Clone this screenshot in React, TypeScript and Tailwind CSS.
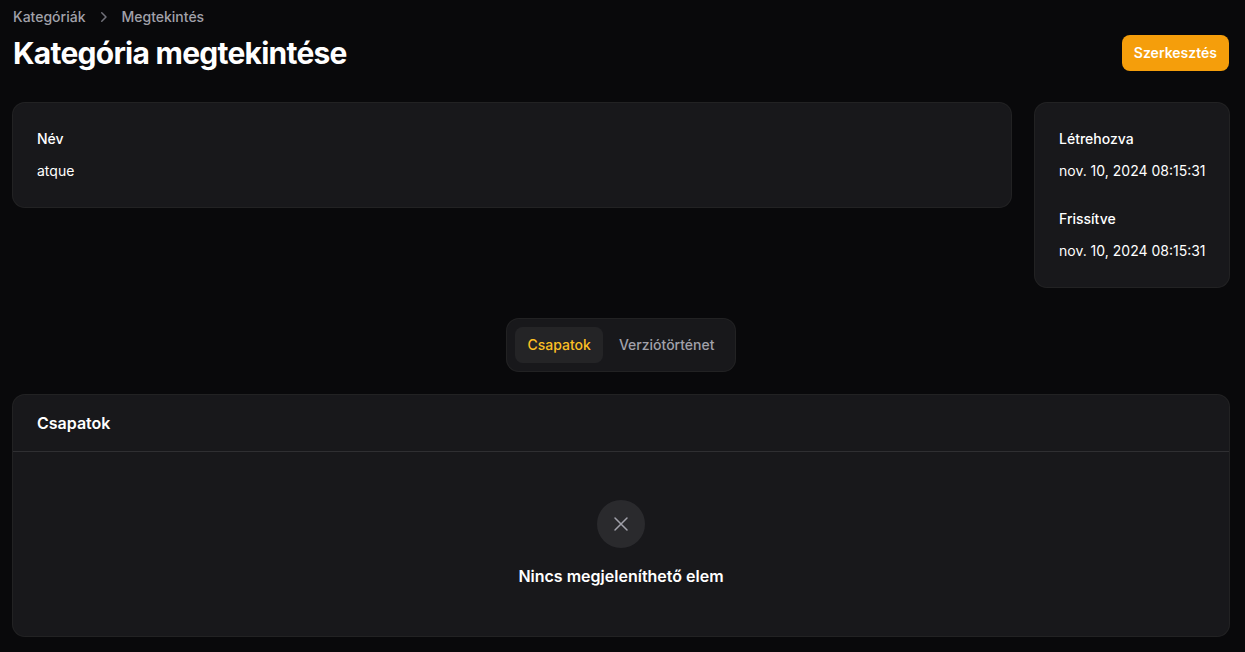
import React from 'react';

function Entry({ label, value }: { label: string; value: string }) {
  return (
    <div className="grid gap-y-2 text-sm leading-6 whitespace-nowrap">
      <dt className="font-medium text-white">{label}</dt>
      <dd className="text-white">{value}</dd>
    </div>
  );
}

const card = 'rounded-xl bg-[#18181b] ring-1 ring-white/10';

export default function App() {
  return (
    <div className="min-h-screen bg-[#09090b] pt-[5px] pr-4 pb-4 pl-[13px] font-['Inter',sans-serif] text-white">
      <header className="flex items-end justify-between">
        <div>
          <nav aria-label="Breadcrumb" className="mb-1.5 flex h-6 items-center gap-x-2 text-sm font-medium text-[#a1a1aa]">
            <a href="#">Kategóriák</a>
            <svg viewBox="0 0 20 20" fill="currentColor" className="size-5 text-[#71717a]" aria-hidden="true">
              <path fillRule="evenodd" clipRule="evenodd" d="M8.22 5.22a.75.75 0 0 1 1.06 0l4.25 4.25a.75.75 0 0 1 0 1.06l-4.25 4.25a.75.75 0 0 1-1.06-1.06L11.94 10 8.22 6.28a.75.75 0 0 1 0-1.06Z" />
            </svg>
            <a href="#">Megtekintés</a>
          </nav>
          <h1 className="text-3xl font-bold tracking-tight">Kategória megtekintése</h1>
        </div>
        <button type="button" className="rounded-lg bg-[#f59e0b] px-3 py-2 text-sm font-semibold text-white">Szerkesztés</button>
      </header>

      <div className="mt-8 flex items-start gap-6">
        <dl className={`${card} min-w-0 grow p-6`}>
          <Entry label="Név" value="atque" />
        </dl>
        <dl className={`${card} grid w-[194px] shrink-0 gap-6 p-6`}>
          <Entry label="Létrehozva" value="nov. 10, 2024 08:15:31" />
          <Entry label="Frissítve" value="nov. 10, 2024 08:15:31" />
        </dl>
      </div>

      <div role="tablist" className={`${card} mx-auto mt-8 flex w-fit gap-x-1 p-2 text-sm font-medium`}>
        <button type="button" role="tab" aria-selected="true" className="rounded-lg bg-white/5 px-3 py-2 text-[#fbbf24]">Csapatok</button>
        <button type="button" role="tab" aria-selected="false" className="rounded-lg px-3 py-2 text-[#a1a1aa]">Verziótörténet</button>
      </div>

      <section className={`${card} mt-6`}>
        <h2 className="border-b border-white/10 px-6 py-4 text-base font-semibold">Csapatok</h2>
        <div className="flex flex-col items-center px-6 py-12">
          <div className="mb-4 rounded-full bg-[#71717a]/20 p-3">
            <svg viewBox="0 0 24 24" fill="none" stroke="currentColor" strokeWidth="1.5" strokeLinecap="round" strokeLinejoin="round" className="size-6 text-[#a1a1aa]" aria-hidden="true">
              <path d="M6 18 18 6M6 6l12 12" />
            </svg>
          </div>
          <h3 className="text-base font-semibold">Nincs megjeleníthető elem</h3>
        </div>
      </section>
    </div>
  );
}
